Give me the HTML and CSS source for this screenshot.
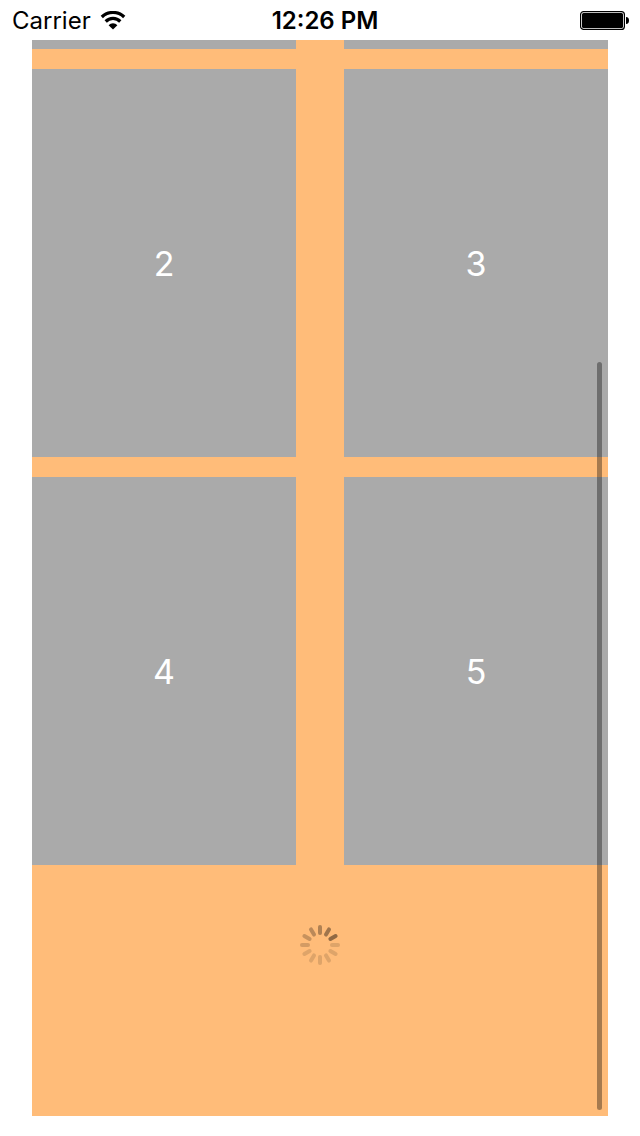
FILE: index.html
```html
<!DOCTYPE html>
<html lang="en">
<head>
<meta charset="utf-8">
<meta name="viewport" content="width=device-width, initial-scale=1">
<title>Collection</title>
<link rel="stylesheet" href="styles.css">
</head>
<body>
<header class="status">
  <div class="carrier">
    <span>Carrier</span>
    <svg class="wifi" viewBox="0 1 26 20" width="26" height="20" aria-label="Wi-Fi">
      <path d="M1.800 7A16 16 0 0 1 24.200 7" fill="none" stroke="#000" stroke-width="3.200"/>
      <path d="M5.700 11.500A10.300 10.300 0 0 1 20.300 11.500" fill="none" stroke="#000" stroke-width="3.200"/>
      <path d="M8.600 15.200A6.200 6.200 0 0 1 17.400 15.200L13 19.600Z"/>
    </svg>
  </div>
  <time class="time">12:26 PM</time>
  <svg class="battery" viewBox="0 1 50 20" width="50" height="20" aria-label="Battery full">
    <rect x="0.6" y="1.6" width="43.8" height="17.8" rx="3" fill="none" stroke="#000" stroke-width="1.2"/>
    <rect x="2" y="3" width="41" height="15" rx="1.5"/>
    <path d="M46 7C48.200 7 49 8.500 49 10.500S48.200 14 46 14Z"/>
  </svg>
</header>
<main class="list">
  <div class="grid">
    <div class="cell"></div>
    <div class="cell"></div>
    <div class="cell">2</div>
    <div class="cell">3</div>
    <div class="cell">4</div>
    <div class="cell">5</div>
  </div>
  <div class="loading" role="status" aria-label="Loading">
    <svg viewBox="-20 -20 40 40" width="40" height="40" stroke="#3b2a1c" stroke-width="4" stroke-linecap="round">
      <path d="M0-12V-18" opacity=".4"/>
      <path d="M0-12V-18" opacity=".48" transform="rotate(30)"/>
      <path d="M0-12V-18" opacity=".56" transform="rotate(60)"/>
      <path d="M0-12V-18" opacity=".16" transform="rotate(90)"/>
      <path d="M0-12V-18" opacity=".16" transform="rotate(120)"/>
      <path d="M0-12V-18" opacity=".16" transform="rotate(150)"/>
      <path d="M0-12V-18" opacity=".16" transform="rotate(180)"/>
      <path d="M0-12V-18" opacity=".16" transform="rotate(210)"/>
      <path d="M0-12V-18" opacity=".16" transform="rotate(240)"/>
      <path d="M0-12V-18" opacity=".22" transform="rotate(270)"/>
      <path d="M0-12V-18" opacity=".28" transform="rotate(300)"/>
      <path d="M0-12V-18" opacity=".34" transform="rotate(330)"/>
    </svg>
  </div>
  <div class="scrollbar"></div>
</main>
</body>
</html>
```
FILE: styles.css
```css
* {
  box-sizing: border-box;
}

body {
  display: flex;
  flex-direction: column;
  min-height: 100vh;
  margin: 0;
  padding-bottom: 20px;
  background: #fff;
  color: #000;
  font-family: Inter, "Liberation Sans", sans-serif;
}

.status {
  display: grid;
  grid-template-columns: 1fr auto 1fr;
  align-items: center;
  height: 40px;
  padding: 2px 2px 0 12px;
  font-size: 24px;
  line-height: 38px;
}

.carrier {
  display: flex;
  align-items: center;
  gap: 9px;
}

.time {
  font-weight: 600;
}

.battery {
  justify-self: end;
  margin-right: 8px;
}

.list {
  position: relative;
  flex: 1;
  margin: 0 32px;
  background: #ffbc79;
}

.grid {
  display: grid;
  grid-template-columns: 1fr 1fr;
  grid-template-rows: 9px;
  grid-auto-rows: 388px;
  gap: 20px 48px;
}

.cell {
  display: flex;
  align-items: center;
  justify-content: center;
  background: #aaa;
  color: #fff;
  font-size: 34px;
  font-weight: 400;
}

.loading {
  display: flex;
  justify-content: center;
  padding: 60px 0;
}

.scrollbar {
  position: absolute;
  top: 322px;
  right: 6px;
  bottom: 6px;
  width: 5px;
  border-radius: 3px;
  background: rgb(0 0 0 / 35%);
}
```
